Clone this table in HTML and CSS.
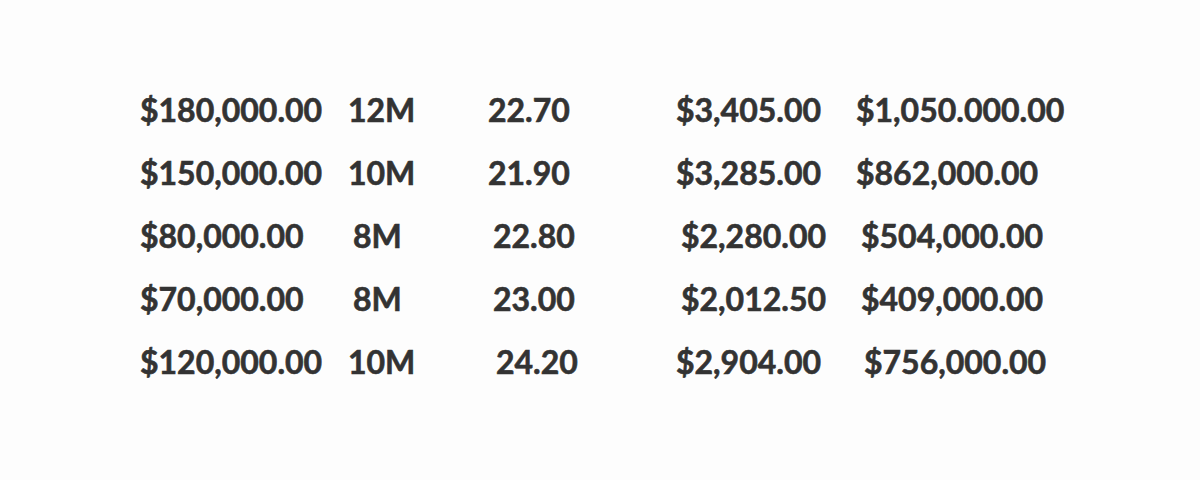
FILE: index.html
```html
<!DOCTYPE html>
<html>
<head>
<meta charset="utf-8">
<link rel="stylesheet" href="styles.css">
</head>
<body>
<div class="sheet">
  <div class="table">
    <div class="row">
      <span class="cell">$180,000.00</span>
      <span class="cell">12M</span>
      <span class="cell">22.70</span>
      <span class="cell">$3,405.00</span>
      <span class="cell">$1,050.000.00</span>
    </div>
    <div class="row">
      <span class="cell">$150,000.00</span>
      <span class="cell">10M</span>
      <span class="cell">21.90</span>
      <span class="cell">$3,285.00</span>
      <span class="cell">$862,000.00</span>
    </div>
    <div class="row">
      <span class="cell">$80,000.00</span>
      <span class="cell shift">8M</span>
      <span class="cell shift">22.80</span>
      <span class="cell shift">$2,280.00</span>
      <span class="cell shift">$504,000.00</span>
    </div>
    <div class="row">
      <span class="cell">$70,000.00</span>
      <span class="cell shift">8M</span>
      <span class="cell shift">23.00</span>
      <span class="cell shift">$2,012.50</span>
      <span class="cell shift">$409,000.00</span>
    </div>
    <div class="row">
      <span class="cell">$120,000.00</span>
      <span class="cell">10M</span>
      <span class="cell shift2">24.20</span>
      <span class="cell">$2,904.00</span>
      <span class="cell shift2">$756,000.00</span>
    </div>
  </div>
</div>
</body>
</html>
```
FILE: styles.css
```css
html, body {
  margin: 0;
  padding: 0;
  background: #fdfdfd;
}
.sheet {
  width: 1200px;
  height: 480px;
  box-sizing: border-box;
  padding: 78px 0 0 140px;
  font-family: "Lato", "Liberation Sans", sans-serif;
  font-weight: 700;
  font-size: 32px;
  color: #333333;
  -webkit-text-stroke: 0.6px #333333;
}
.table {
  display: flex;
  flex-direction: column;
}
.row {
  display: grid;
  grid-template-columns: 208px 140px 188px 180px auto;
  height: 63px;
  align-items: center;
}
.cell {
  white-space: nowrap;
  line-height: 44px;
}
.shift {
  padding-left: 5px;
}
.shift2 {
  padding-left: 8px;
}
```
